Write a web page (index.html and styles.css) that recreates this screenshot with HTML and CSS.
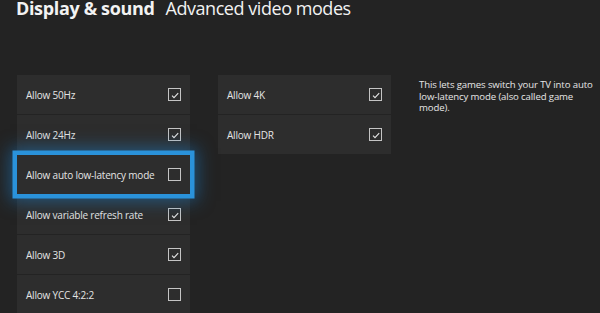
FILE: index.html
```html
<!DOCTYPE html>
<html lang="en">
<head>
    <meta charset="UTF-8">
    <meta name="viewport" content="width=device-width, initial-scale=1.0">
    <title>Advanced video modes</title>
    <link rel="stylesheet" href="styles.css">
</head>
<body>
    <header class="title">
        <span class="section">Display &amp; sound</span>
        <span class="page">Advanced video modes</span>
    </header>

    <main class="content">
        <ul class="options">
            <li class="option"><span class="label">Allow 50Hz</span><span class="check checked"><svg viewBox="0 0 10 10"><path d="M2 5.6 L4 7.6 L8.2 3.2"/></svg></span></li>
            <li class="option"><span class="label">Allow 24Hz</span><span class="check checked"><svg viewBox="0 0 10 10"><path d="M2 5.6 L4 7.6 L8.2 3.2"/></svg></span></li>
            <li class="option focused"><span class="label">Allow auto low-latency mode</span><span class="check"></span></li>
            <li class="option"><span class="label">Allow variable refresh rate</span><span class="check checked"><svg viewBox="0 0 10 10"><path d="M2 5.6 L4 7.6 L8.2 3.2"/></svg></span></li>
            <li class="option"><span class="label">Allow 3D</span><span class="check checked"><svg viewBox="0 0 10 10"><path d="M2 5.6 L4 7.6 L8.2 3.2"/></svg></span></li>
            <li class="option"><span class="label">Allow YCC 4:2:2</span><span class="check"></span></li>
        </ul>

        <ul class="options">
            <li class="option"><span class="label">Allow 4K</span><span class="check checked"><svg viewBox="0 0 10 10"><path d="M2 5.6 L4 7.6 L8.2 3.2"/></svg></span></li>
            <li class="option"><span class="label">Allow HDR</span><span class="check checked"><svg viewBox="0 0 10 10"><path d="M2 5.6 L4 7.6 L8.2 3.2"/></svg></span></li>
        </ul>

        <p class="hint">This lets games switch your TV into auto low-latency mode (also called game mode).</p>
    </main>
</body>
</html>
```

FILE: styles.css
```css
body {
    font-family: "Open Sans", "Noto Sans", sans-serif;
    background-color: #232323;
    color: #e6e6e6;
    margin: 0;
    padding: 0;
    width: 600px;
    height: 313px;
    overflow: hidden;
}

.title {
    display: flex;
    gap: 11px;
    padding-left: 16px;
    margin-top: -5px;
    height: 30px;
    font-size: 18px;
    line-height: 26px;
    letter-spacing: -0.45px;
    color: #f2f2f2;
    white-space: nowrap;
}

.title .section {
    font-weight: 700;
    letter-spacing: -0.35px;
}

.title .page {
    font-weight: 400;
}

.content {
    display: flex;
    align-items: flex-start;
    padding: 50px 0 0 17px;
}

.options {
    list-style: none;
    margin: 0;
    padding: 0;
    display: flex;
    flex-direction: column;
    gap: 1px;
    width: 173px;
    flex-shrink: 0;
}

.options + .options {
    margin-left: 28px;
}

.option {
    display: flex;
    align-items: center;
    justify-content: space-between;
    height: 39px;
    padding: 0 9px 0 9px;
    background-color: #2d2d2d;
    font-size: 10px;
    letter-spacing: -0.2px;
    color: #e4e4e4;
    white-space: nowrap;
    box-sizing: border-box;
}

.option.focused {
    position: relative;
    z-index: 1;
    box-shadow:
        0 0 0 4.5px #2a92da,
        0 0 16px 7px rgba(25, 130, 210, 0.5);
}

.check {
    width: 13px;
    height: 13px;
    box-sizing: border-box;
    border: 1.5px solid #c4c4c4;
    display: flex;
    align-items: center;
    justify-content: center;
}

.check svg {
    width: 10px;
    height: 10px;
    fill: none;
    stroke: #e6e6e6;
    stroke-width: 1.1;
}

.hint {
    flex-shrink: 0;
    margin: 4px 0 0 28px;
    width: 182px;
    font-size: 9.6px;
    line-height: 11.5px;
    letter-spacing: -0.12px;
    color: #e6e6e6;
}
```
